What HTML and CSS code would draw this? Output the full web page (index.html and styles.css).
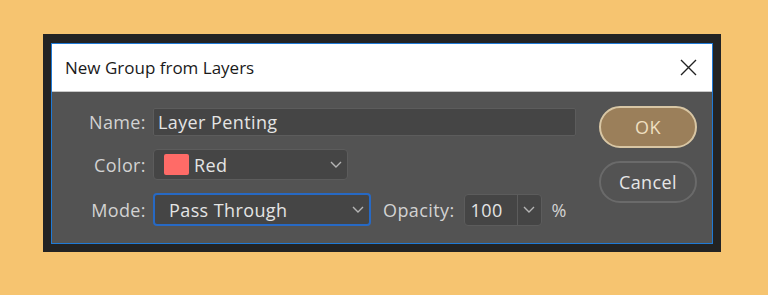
FILE: index.html
```html
<!DOCTYPE html>
<html lang="en">
<head>
    <meta charset="UTF-8">
    <title>New Group from Layers</title>
    <link rel="stylesheet" href="styles.css">
</head>
<body>
    <div class="frame">
        <div class="dialog">
            <div class="titlebar">
                <span class="title">New Group from Layers</span>
                <svg class="close" width="17" height="17" viewBox="0 0 17 17">
                    <path d="M1 1 L16 16 M16 1 L1 16" stroke="#222" stroke-width="1.4" fill="none"/>
                </svg>
            </div>
            <div class="content">
                <div class="form">
                    <label class="label">Name:</label>
                    <div class="field name-field">Layer Penting</div>

                    <label class="label">Color:</label>
                    <div class="field select color-select">
                        <span class="swatch"></span>
                        <span class="value">Red</span>
                        <svg class="chevron" width="12" height="7" viewBox="0 0 12 7"><path d="M1 1 L6 6 L11 1" stroke="#b5b5b5" stroke-width="1.4" fill="none"/></svg>
                    </div>

                    <label class="label">Mode:</label>
                    <div class="mode-row">
                        <div class="field select mode-select">
                            <span class="value">Pass Through</span>
                            <svg class="chevron" width="12" height="7" viewBox="0 0 12 7"><path d="M1 1 L6 6 L11 1" stroke="#b5b5b5" stroke-width="1.4" fill="none"/></svg>
                        </div>
                        <span class="label opacity-label">Opacity:</span>
                        <div class="field opacity">
                            <span class="num">100</span>
                            <span class="spin">
                                <svg width="12" height="7" viewBox="0 0 12 7"><path d="M1 1 L6 6 L11 1" stroke="#b5b5b5" stroke-width="1.4" fill="none"/></svg>
                            </span>
                        </div>
                        <span class="label percent">%</span>
                    </div>
                </div>
                <div class="buttons">
                    <button class="btn ok">OK</button>
                    <button class="btn cancel">Cancel</button>
                </div>
            </div>
        </div>
    </div>
</body>
</html>
```
FILE: styles.css
```css
* {
    margin: 0;
    padding: 0;
    box-sizing: border-box;
}

body {
    background: #f6c470;
    font-family: 'Open Sans', 'Noto Sans', sans-serif;
    height: 295px;
    overflow: hidden;
}

.frame {
    margin: 34px 0 0 43px;
    width: 678px;
    height: 218px;
    background: #232323;
    padding: 9px 8px 8px 8px;
}

.dialog {
    width: 662px;
    height: 201px;
    border: 1px solid #1f7ad6;
    background: #535353;
    display: flex;
    flex-direction: column;
}

.titlebar {
    height: 48px;
    background: #ffffff;
    border-bottom: 1px solid #c8c8c8;
    display: flex;
    align-items: center;
    justify-content: space-between;
    padding: 0 15px 0 13px;
}

.title {
    font-size: 17px;
    color: #1a1a1a;
}

.content {
    flex: 1;
    display: flex;
    justify-content: space-between;
    padding: 14px 15px 0 0;
}

.form {
    display: grid;
    grid-template-columns: 94px auto;
    column-gap: 7px;
    row-gap: 13px;
    align-items: center;
    padding-top: 2px;
    align-content: start;
}

.label {
    color: #d2d2d2;
    font-size: 18px;
    letter-spacing: 0.4px;
    text-align: right;
}

.field {
    background: #454545;
    border: 1px solid #5c5c5c;
    border-radius: 2px;
    color: #e4e4e4;
    font-size: 18px;
    letter-spacing: 0.4px;
    display: flex;
    align-items: center;
}

.name-field {
    width: 423px;
    height: 28px;
    padding-left: 4px;
}

.select {
    border-radius: 4px;
    justify-content: space-between;
}

.color-select {
    width: 195px;
    height: 31px;
    padding: 0 5px 0 10px;
}

.swatch {
    width: 25px;
    height: 21px;
    background: #ff6b67;
    border-radius: 2px;
}

.color-select .value {
    flex: 1;
    padding-left: 5px;
}

.mode-row {
    display: flex;
    align-items: center;
}

.mode-select {
    width: 218px;
    height: 33px;
    border: 2px solid #2769c4;
    padding: 0 5px 0 14px;
}

.opacity-label {
    margin-left: 12px;
}

.opacity {
    width: 78px;
    height: 32px;
    margin-left: 9px;
    border-radius: 4px;
}

.num {
    width: 53px;
    padding-left: 6px;
    height: 100%;
    display: flex;
    align-items: center;
    border-right: 1px solid #5c5c5c;
}

.spin {
    flex: 1;
    display: flex;
    justify-content: center;
}

.percent {
    margin-left: 10px;
}

.buttons {
    display: flex;
    flex-direction: column;
    gap: 13px;
}

.btn {
    width: 98px;
    height: 42px;
    border-radius: 21px;
    font-family: 'Open Sans', 'Noto Sans', sans-serif;
    font-size: 18px;
    letter-spacing: 0.4px;
}

.ok {
    background: #9b7f5a;
    border: 2px solid #d8c6a4;
    color: #efdfc0;
}

.cancel {
    background: transparent;
    border: 2px solid #6a6a6a;
    color: #e6e6e6;
}
```
